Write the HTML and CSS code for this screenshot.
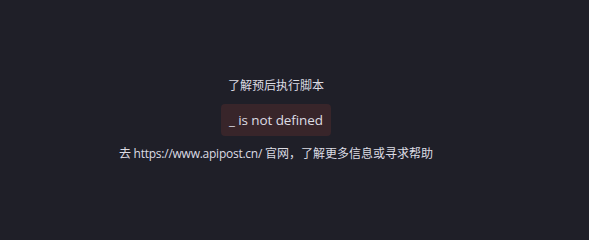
FILE: index.html
```
<!DOCTYPE html>
<html lang="zh">
<head>
<meta charset="utf-8">
<link rel="stylesheet" href="styles.css">
</head>
<body>
<div class="page">
  <div class="panel">
    <div class="title">了解预后执行脚本</div>
    <div class="error">_ is not defined</div>
    <div class="hint"><span class="latin">去 https://www.apipost.cn/ </span>官网，了解更多信息或寻求帮助</div>
  </div>
</div>
</body>
</html>
```
FILE: styles.css
```
html, body {
  margin: 0;
  padding: 0;
  background: #1f1f28;
}
.page {
  width: 552px;
  height: 220px;
  display: flex;
  justify-content: center;
  align-items: flex-start;
  font-family: "Open Sans", "Noto Sans CJK SC", sans-serif;
  color: #dcdce4;
  overflow: hidden;
}
.panel {
  display: flex;
  flex-direction: column;
  align-items: center;
  padding-top: 77px;
}
.title {
  font-size: 12px;
  line-height: 18px;
}
.error {
  margin-top: 9px;
  background: #38252a;
  border-radius: 4px;
  font-size: 13.5px;
  line-height: 20px;
  padding: 6px 8px;
  letter-spacing: -0.1px;
}
.hint {
  margin-top: 9px;
  font-size: 12px;
  line-height: 18px;
}
.latin {
  letter-spacing: -0.25px;
}
```
